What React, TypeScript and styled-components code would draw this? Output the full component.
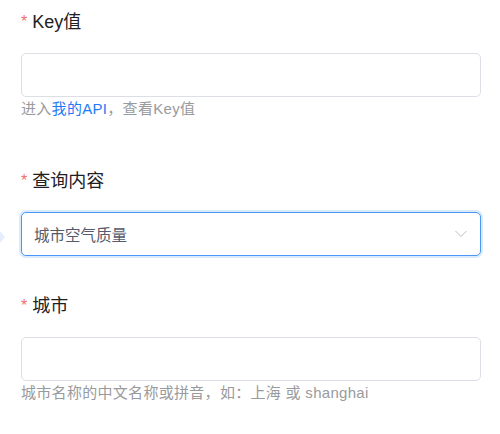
import styled, { createGlobalStyle } from "styled-components";

const GlobalStyle = createGlobalStyle`
    body {
        margin: 0;
        background: #ffffff;
        font-family: "Liberation Sans", "Noto Sans CJK SC", Arial, sans-serif;
    }
`;

const Page = styled.div`
    position: relative;
    padding: 10px 19px 0 21px;
`;

const Form = styled.form`
    display: flex;
    flex-direction: column;
`;

const Item = styled.div<{ $gap?: number }>`
    display: flex;
    flex-direction: column;
    margin-bottom: ${(p) => p.$gap ?? 38}px;
`;

const Label = styled.label`
    display: flex;
    align-items: center;
    height: 24px;
    line-height: 24px;
    font-size: 18px;
    color: #1f2023;
    margin-bottom: 19px;
`;

const Star = styled.span`
    color: #f56c6c;
    font-size: 16px;
    margin-right: 5px;
    align-self: flex-start;
    line-height: 24px;
`;

const Field = styled.div<{ $focused?: boolean }>`
    position: relative;
    box-sizing: border-box;
    height: 44px;
    display: flex;
    align-items: center;
    padding: 0 12px;
    border: 1px solid ${(p) => (p.$focused ? "#4a98f5" : "#dcdfe6")};
    border-radius: 5px;
    background: #fff;
    box-shadow: ${(p) => (p.$focused ? "0 0 0 2px rgba(74, 152, 245, 0.2)" : "none")};
`;

const Input = styled.input`
    flex: 1;
    border: none;
    outline: none;
    background: transparent;
    font: inherit;
    font-size: 15px;
    color: #606266;
    padding: 0;
`;

const Value = styled.span`
    flex: 1;
    font-size: 15.5px;
    color: #555b6c;
`;

const Chevron = styled.svg`
    width: 12px;
    height: 8px;
    margin-right: 1px;
`;

const Help = styled.div`
    margin-top: 1px;
    margin-bottom: -2px;
    line-height: 22px;
    font-size: 15px;
    letter-spacing: 0.3px;
    color: #999a9c;
`;

const Link = styled.a`
    color: #1f7af5;
    text-decoration: none;
`;

const Arrow = styled.div`
    position: absolute;
    left: 0;
    top: 231px;
    width: 0;
    height: 0;
    border-top: 6px solid transparent;
    border-bottom: 6px solid transparent;
    border-left: 5px solid #e3effc;
`;

export default function App() {
    return (
        <>
            <GlobalStyle />
            <Page>
                <Arrow />
                <Form>
                    <Item $gap={51}>
                        <Label>
                            <Star>*</Star>Key值
                        </Label>
                        <Field>
                            <Input type="text" />
                        </Field>
                        <Help>
                            进入<Link href="#">我的API</Link>，查看Key值
                        </Help>
                    </Item>
                    <Item>
                        <Label>
                            <Star>*</Star>查询内容
                        </Label>
                        <Field $focused>
                            <Value>城市空气质量</Value>
                            <Chevron viewBox="0 0 12 8" fill="none">
                                <path d="M0.5 1 L6 6.5 L11.5 1" stroke="#b8bcc4" strokeWidth="1" />
                            </Chevron>
                        </Field>
                    </Item>
                    <Item>
                        <Label>
                            <Star>*</Star>城市
                        </Label>
                        <Field>
                            <Input type="text" />
                        </Field>
                        <Help>城市名称的中文名称或拼音，如：上海 或 shanghai</Help>
                    </Item>
                </Form>
            </Page>
        </>
    );
}
